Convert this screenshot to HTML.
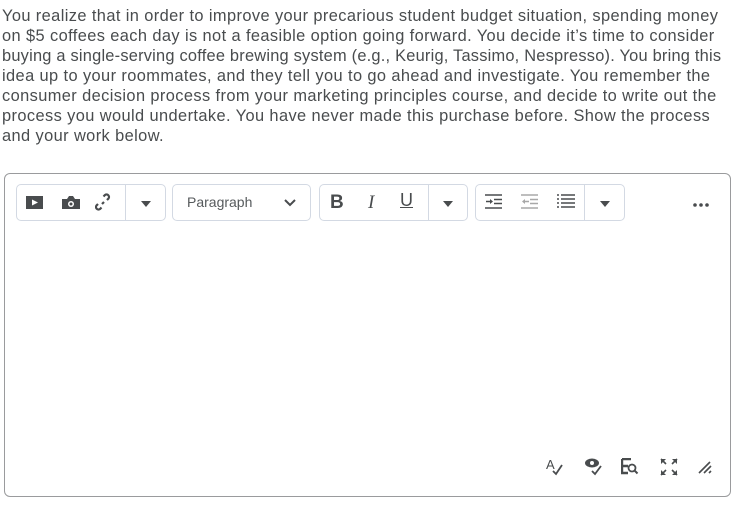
<!DOCTYPE html>
<html><head><style>
body{margin:0;background:#fff;font-family:"Liberation Sans",sans-serif;color:#494c4e;width:745px;height:514px;overflow:hidden;position:relative}
.q{position:absolute;left:2px;top:6px;font-size:16.4px;line-height:20px;color:#494c4e;letter-spacing:0.4px;white-space:nowrap}
.ed{position:absolute;left:4px;top:173px;width:727px;height:324px;border:1px solid #9a9b9d;border-radius:6px;box-sizing:border-box}
.g{position:absolute;top:184px;height:37px;border:1px solid #d3d9e3;border-radius:5px;box-sizing:border-box}
.sep{position:absolute;top:0;bottom:0;width:1px;background:#d3d9e3}
.ic{position:absolute}
.tri{position:absolute;width:0;height:0;border-left:5px solid transparent;border-right:5px solid transparent;border-top:6px solid #494c4e}
</style></head><body>
<div class="q">You realize that in order to improve your precarious student budget situation, spending money<br>on $5 coffees each day is not a feasible option going forward. You decide it’s time to consider<br><span style="letter-spacing:0.22px">buying a single-serving coffee brewing system (e.g., Keurig, Tassimo, Nespresso). You bring this</span><br>idea up to your roommates, and they tell you to go ahead and investigate. You remember the<br>consumer decision process from your marketing principles course, and decide to write out the<br>process you would undertake. You have never made this purchase before. Show the process<br>and your work below.</div>
<div class="ed"></div>
<div class="g" style="left:16px;width:150px">
 <svg class="ic" style="left:9px;top:10px" width="18" height="16"><rect x="0" y="1" width="17" height="13" fill="#494c4e"/><path d="M6 4.5 L12 7.5 L6 10.5Z" fill="#fff"/></svg>
 <svg class="ic" style="left:44px;top:10px" width="20" height="16"><path d="M1 4h5l2-3h4l2 3h5v10H1z" fill="#494c4e"/><circle cx="10" cy="9" r="3" fill="#fff"/><circle cx="10" cy="9" r="1.5" fill="#494c4e"/></svg>
 <svg class="ic" style="left:78px;top:8px" width="18" height="18"><path d="M3 11l-1.5 1.5a2.5 2.5 0 0 0 3.5 3.5L6.5 14.5M9 9L7 11M12 7l1.5-1.5A2.5 2.5 0 0 0 10 2L8.5 3.5" stroke="#494c4e" stroke-width="2.2" fill="none"/></svg>
 <div class="sep" style="left:108px"></div>
 <div class="tri" style="left:124px;top:16px"></div>
</div>
<div class="g" style="left:172px;width:139px">
 <span style="position:absolute;left:14px;top:9px;font-size:14px;color:#565a5c">Paragraph</span>
 <svg class="ic" style="left:111px;top:14px" width="12" height="8"><path d="M1 1l5 5 5-5" stroke="#494c4e" stroke-width="2" fill="none"/></svg>
</div>
<div class="g" style="left:319px;width:149px">
 <span style="position:absolute;left:10px;top:7px;font-size:19px;font-weight:bold;color:#494c4e">B</span>
 <span style="position:absolute;left:48px;top:7px;font-size:19px;font-style:italic;font-family:'Liberation Serif',serif;color:#494c4e">I</span>
 <span style="position:absolute;left:80px;top:5px;font-size:18px;color:#494c4e;text-decoration:underline">U</span>
 <div class="sep" style="left:108px"></div>
 <div class="tri" style="left:123px;top:16px"></div>
</div>
<div class="g" style="left:475px;width:150px">
 <svg class="ic" style="left:9px;top:9px" width="18" height="16"><path d="M0 1h17M9 5.5h8M9 9.5h8M0 14h17M1 7.5h5" stroke="#494c4e" stroke-width="1.6"/><path d="M5 5l3 2.5-3 2.5z" fill="#494c4e"/></svg>
 <svg class="ic" style="left:45px;top:9px" width="18" height="16"><path d="M0 1h17M9 5.5h8M9 9.5h8M0 14h17M3 7.5h5" stroke="#a8a8a8" stroke-width="1.6"/><path d="M4 5l-3 2.5 3 2.5z" fill="#a8a8a8"/></svg>
 <svg class="ic" style="left:81px;top:9px" width="18" height="16"><path d="M4 1h14M4 5h14M4 9h14M4 13h14M0 1h2M0 5h2M0 9h2M0 13h2" stroke="#494c4e" stroke-width="1.5"/></svg>
 <div class="sep" style="left:108px"></div>
 <div class="tri" style="left:124px;top:16px"></div>
</div>
<svg class="ic" style="left:692px;top:202px" width="20" height="6"><circle cx="3" cy="3" r="1.8" fill="#494c4e"/><circle cx="9" cy="3" r="1.8" fill="#494c4e"/><circle cx="15" cy="3" r="1.8" fill="#494c4e"/></svg>
<svg class="ic" style="left:546px;top:458px" width="18" height="18"><text x="0" y="11" font-size="13" font-family="Liberation Sans" fill="#494c4e">A</text><path d="M7 13l3 3 6-9" stroke="#494c4e" stroke-width="1.8" fill="none"/></svg>
<svg class="ic" style="left:584px;top:457px" width="20" height="20"><ellipse cx="8" cy="6" rx="7" ry="4.5" fill="#494c4e"/><circle cx="8" cy="6" r="2" fill="#fff"/><path d="M8 14l3 3 6-8" stroke="#494c4e" stroke-width="1.8" fill="none"/></svg>
<svg class="ic" style="left:621px;top:458px" width="20" height="18"><path d="M1 1v14h6M1 1h9M1 8h6" stroke="#494c4e" stroke-width="2.4" fill="none"/><circle cx="11" cy="10" r="3.5" stroke="#494c4e" stroke-width="1.8" fill="none"/><path d="M13.5 12.5l3 3" stroke="#494c4e" stroke-width="2"/></svg>
<svg class="ic" style="left:660px;top:458px" width="18" height="18"><path d="M1 1h5L1 6zM17 1h-5l5 5zM1 17h5L1 12zM17 17h-5l5-5z" fill="#494c4e"/><path d="M1 1l5 5M17 1l-5 5M1 17l5-5M17 17l-5-5" stroke="#494c4e" stroke-width="1.6"/></svg>
<svg class="ic" style="left:698px;top:460px" width="16" height="16"><path d="M1 13L12 2M6 13l7-7M11 13l2-2" stroke="#494c4e" stroke-width="1.6"/></svg>
</body></html>
